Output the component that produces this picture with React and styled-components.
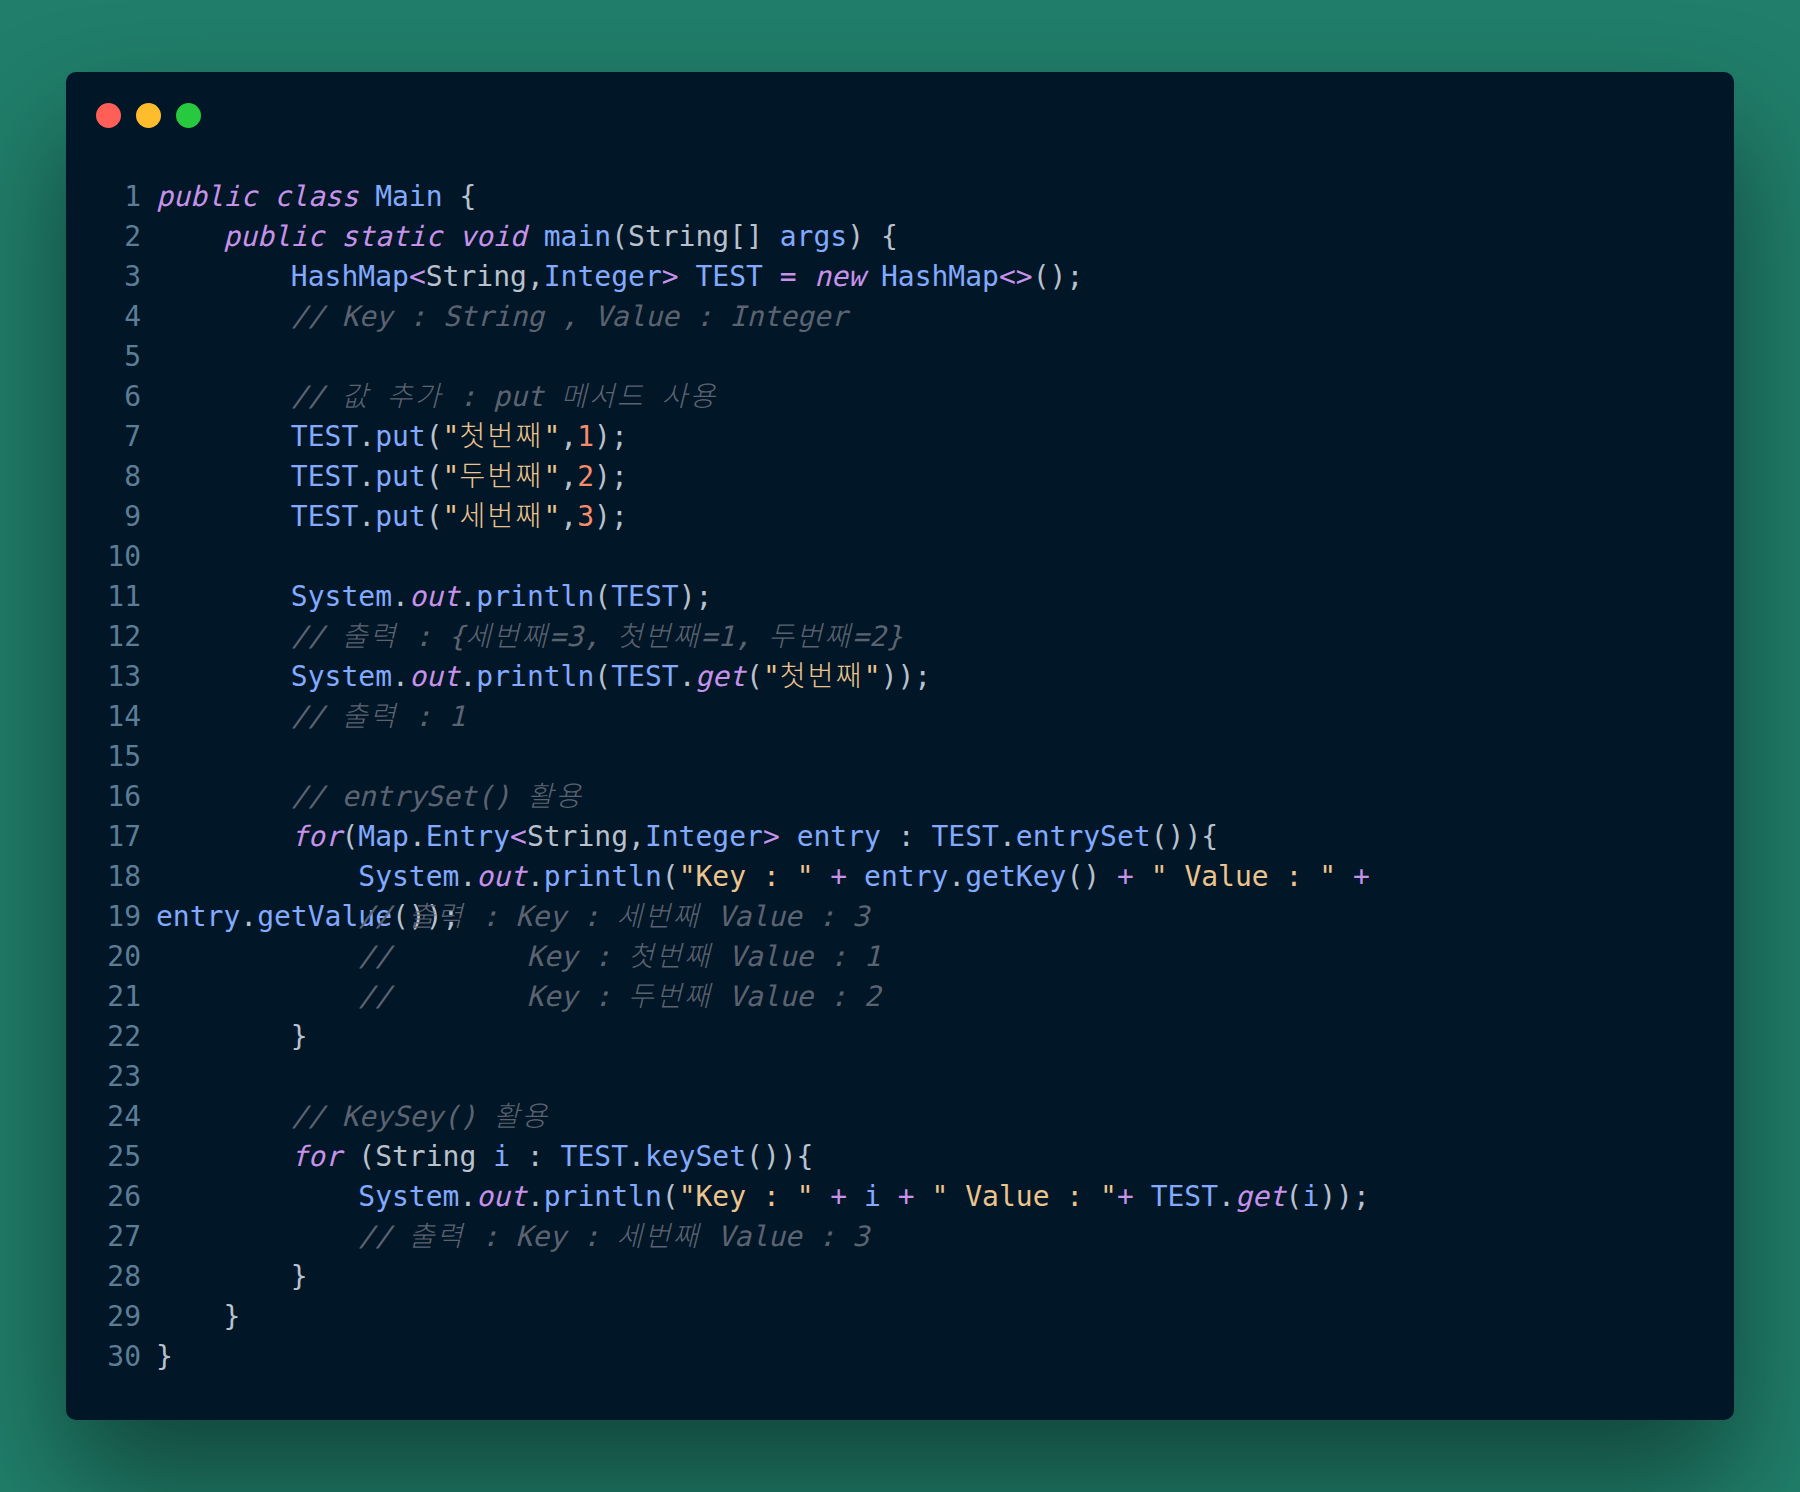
import React from "react";
import styled, { createGlobalStyle } from "styled-components";

const COLORS = {
  plain: "#b9c1cd",
  name: "#82aaff",
  key: "#c792ea",
  str: "#ecc48d",
  num: "#f78c6c",
  note: "#5c6370",
};

const GlobalStyle = createGlobalStyle`
  html, body {
    margin: 0;
    padding: 0;
    background: #207e6a;
  }
`;

const Page = styled.div`
  width: 1800px;
  height: 1492px;
  box-sizing: border-box;
  padding: 72px 66px;
  background: #207e6a;
  overflow: hidden;
`;

const Window = styled.div`
  height: 1348px;
  box-sizing: border-box;
  padding: 31px 30px 44px;
  background: #011627;
  border-radius: 10px;
  box-shadow: 0 60px 120px rgba(0, 0, 0, 0.45);
`;

const Dots = styled.div`
  display: flex;
  gap: 15px;
  margin-bottom: 49px;
`;

const Dot = styled.span`
  width: 25px;
  height: 25px;
  border-radius: 50%;
  background: ${(props) => props.$color};
`;

const Row = styled.div`
  display: flex;
  height: 40px;
  font-family: "DejaVu Sans Mono", "Noto Sans CJK KR", monospace;
  font-size: 28px;
  line-height: 40px;
`;

const LineNo = styled.div`
  width: 45px;
  margin-right: 15px;
  text-align: right;
  color: #5b7e96;
  flex-shrink: 0;
`;

const Code = styled.div`
  width: 1300px;
  white-space: pre-wrap;
  color: ${COLORS.plain};
`;

const Token = styled.span`
  color: ${(props) => COLORS[props.$kind]};
`;

// slanted by hand: the picture has a faked italic, not the DejaVu oblique
const Slanted = styled(Token)`
  display: inline-block;
  transform-origin: 0 30px;
  transform: skewX(-14deg);
`;

// the hangul in the picture is thin and sits on a 1em pitch
const Hangul = styled.span`
  font-weight: 300;
  letter-spacing: 2.24px;
`;

const lines = [
  [["i", "public class "], ["n", "Main"], ["p", " {"]],
  [["p", "    "], ["i", "public static void "], ["n", "main"], ["p", "(String[] "], ["n", "args"], ["p", ") {"]],
  [["p", "        "], ["n", "HashMap"], ["k", "<"], ["p", "String,"], ["n", "Integer"], ["k", ">"], ["n", " TEST "], ["k", "= "], ["i", "new "], ["n", "HashMap"], ["k", "<>"], ["p", "();"]],
  [["p", "        "], ["c", "// Key : String , Value : Integer"]],
  [],
  [["p", "        "], ["c", "// 값 추가 : put 메서드 사용"]],
  [["p", "        "], ["n", "TEST"], ["p", "."], ["n", "put"], ["p", "("], ["s", '"첫번째"'], ["p", ","], ["d", "1"], ["p", ");"]],
  [["p", "        "], ["n", "TEST"], ["p", "."], ["n", "put"], ["p", "("], ["s", '"두번째"'], ["p", ","], ["d", "2"], ["p", ");"]],
  [["p", "        "], ["n", "TEST"], ["p", "."], ["n", "put"], ["p", "("], ["s", '"세번째"'], ["p", ","], ["d", "3"], ["p", ");"]],
  [],
  [["p", "        "], ["n", "System"], ["p", "."], ["i", "out"], ["p", "."], ["n", "println"], ["p", "("], ["n", "TEST"], ["p", ");"]],
  [["p", "        "], ["c", "// 출력 : {세번째=3, 첫번째=1, 두번째=2}"]],
  [["p", "        "], ["n", "System"], ["p", "."], ["i", "out"], ["p", "."], ["n", "println"], ["p", "("], ["n", "TEST"], ["p", "."], ["i", "get"], ["p", "("], ["s", '"첫번째"'], ["p", "));"]],
  [["p", "        "], ["c", "// 출력 : 1"]],
  [],
  [["p", "        "], ["c", "// entrySet() 활용"]],
  [["p", "        "], ["i", "for"], ["p", "("], ["n", "Map"], ["p", "."], ["n", "Entry"], ["k", "<"], ["p", "String,"], ["n", "Integer"], ["k", ">"], ["n", " entry "], ["p", ": "], ["n", "TEST"], ["p", "."], ["n", "entrySet"], ["p", "()){"]],
  [["p", "            "], ["n", "System"], ["p", "."], ["i", "out"], ["p", "."], ["n", "println"], ["p", "("], ["s", '"Key : "'], ["k", " + "], ["n", "entry"], ["p", "."], ["n", "getKey"], ["p", "() "], ["k", "+ "], ["s", '" Value : "'], ["k", " + "], ["n", "entry"], ["p", "."], ["n", "getValue"], ["p", "());"]],
  [["p", "            "], ["c", "// 출력 : Key : 세번째 Value : 3"]],
  [["p", "            "], ["c", "//        Key : 첫번째 Value : 1"]],
  [["p", "            "], ["c", "//        Key : 두번째 Value : 2"]],
  [["p", "        }"]],
  [],
  [["p", "        "], ["c", "// KeySey() 활용"]],
  [["p", "        "], ["i", "for"], ["p", " (String "], ["n", "i"], ["p", " : "], ["n", "TEST"], ["p", "."], ["n", "keySet"], ["p", "()){"]],
  [["p", "            "], ["n", "System"], ["p", "."], ["i", "out"], ["p", "."], ["n", "println"], ["p", "("], ["s", '"Key : "'], ["k", " + "], ["n", "i"], ["k", " + "], ["s", '" Value : "'], ["k", "+ "], ["n", "TEST"], ["p", "."], ["i", "get"], ["p", "("], ["n", "i"], ["p", "));"]],
  [["p", "            "], ["c", "// 출력 : Key : 세번째 Value : 3"]],
  [["p", "        }"]],
  [["p", "    }"]],
  [["p", "}"]],
];

const KINDS = {
  p: { kind: "plain" },
  n: { kind: "name" },
  k: { kind: "key" },
  i: { kind: "key", slanted: true },
  s: { kind: "str" },
  d: { kind: "num" },
  c: { kind: "note", slanted: true },
};

const withHangul = (text) =>
  text.split(/([가-힣]+)/).map((part, i) => (i % 2 ? <Hangul key={i}>{part}</Hangul> : part));

const App = () => {
  return (
    <Page>
      <GlobalStyle />
      <Window>
        <Dots>
          <Dot $color="#ff5f56" />
          <Dot $color="#ffbd2e" />
          <Dot $color="#27c93f" />
        </Dots>
        {lines.map((tokens, index) => (
          <Row key={index}>
            <LineNo>{index + 1}</LineNo>
            <Code>
              {tokens.map(([type, text], i) => {
                const Part = KINDS[type].slanted ? Slanted : Token;
                return (
                  <Part key={i} $kind={KINDS[type].kind}>
                    {withHangul(text)}
                  </Part>
                );
              })}
            </Code>
          </Row>
        ))}
      </Window>
    </Page>
  );
};

export default App;
